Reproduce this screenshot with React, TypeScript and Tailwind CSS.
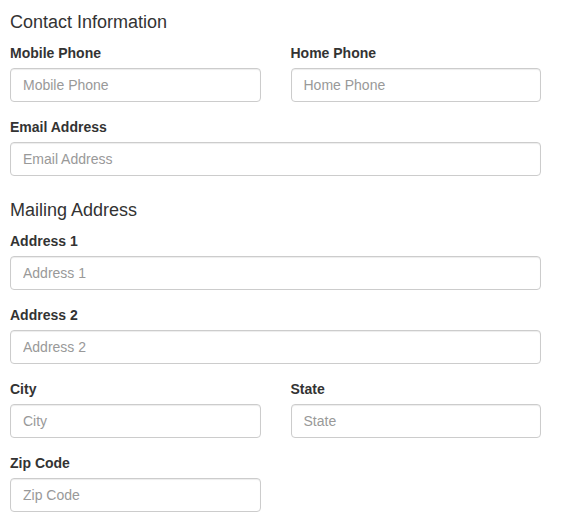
import React from 'react';

const Field: React.FC<{ label: string }> = ({ label }) => (
  <div className="mb-[15px]">
    <label className="mb-[5px] block text-[14px] font-bold leading-[20px] text-[#333]">{label}</label>
    <input
      type="text"
      placeholder={label}
      className="block h-[34px] w-full rounded-[4px] border border-[#ccc] bg-white px-[12px] py-[6px] text-[14px] leading-[20px] text-[#555] shadow-[inset_0_1px_1px_rgba(0,0,0,0.075)] placeholder:text-[#999] focus:outline-none"
    />
  </div>
);

// margins collapse with the field's mb-[15px], so the second heading needs the full gap
const Heading: React.FC<{ children: React.ReactNode; first?: boolean }> = ({ children, first }) => (
  <h4 className={`${first ? 'mt-0' : 'mt-[25px]'} mb-[10px] text-[18px] font-normal leading-[1.1] text-[#333]`}>{children}</h4>
);

const App: React.FC = () => {
  return (
    <div
      className="min-h-[522px] bg-white pl-[10px] pt-[13px]"
      style={{ fontFamily: '"Liberation Sans", Arial, Helvetica, sans-serif' }}
    >
      <form className="w-[531px]">
        <Heading first>Contact Information</Heading>
        <div className="grid grid-cols-2 gap-x-[30px]">
          <Field label="Mobile Phone" />
          <Field label="Home Phone" />
        </div>
        <Field label="Email Address" />

        <Heading>Mailing Address</Heading>
        <Field label="Address 1" />
        <Field label="Address 2" />
        <div className="grid grid-cols-2 gap-x-[30px]">
          <Field label="City" />
          <Field label="State" />
        </div>
        <div className="grid grid-cols-2 gap-x-[30px]">
          <Field label="Zip Code" />
        </div>
      </form>
    </div>
  );
};

export default App;
